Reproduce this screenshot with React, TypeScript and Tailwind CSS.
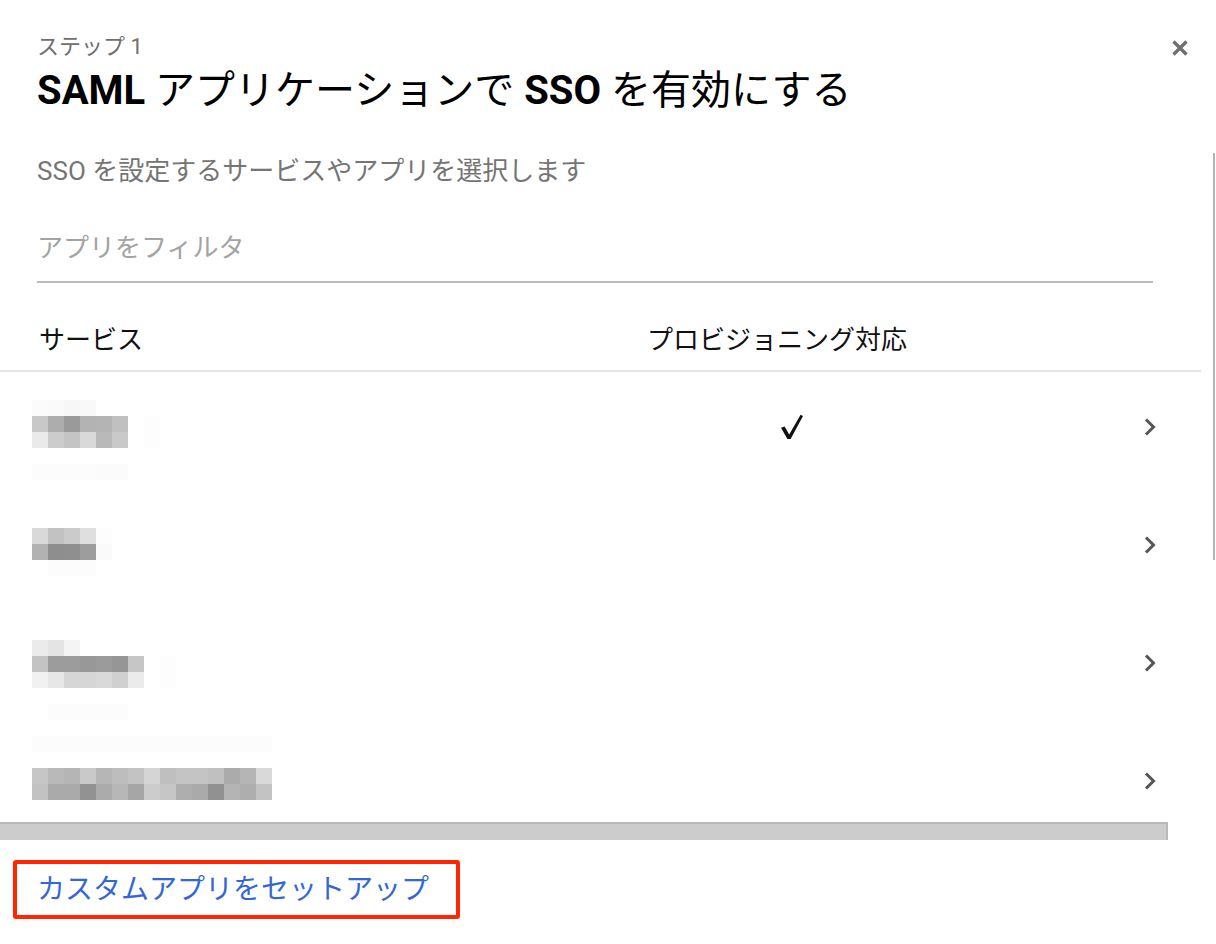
import React from 'react';

type PixelRows = string[][];

// obfuscated app names, drawn as 16px mosaic cells
const ROWS: { top: number; pixels: PixelRows; provisioning: boolean }[] = [
  {
    top: 28,
    provisioning: true,
    pixels: [
      ['#fbfbfb', '#fafafa', '#f7f7f7', '#f9f9f9'],
      ['#c8c8c8', '#adadad', '#9a9a9a', '#b3b3b3', '#b4b4b4', '#c0c0c0', '', '#fdfdfd'],
      ['#eaeaea', '#cccccc', '#c4c4c4', '#d9d9d9', '#b9b9b9', '#c9c9c9', '', '#fdfdfd'],
      [],
      ['#fcfcfc', '#fcfcfc', '#fcfcfc', '#fcfcfc', '#fbfbfb', '#fbfbfb'],
    ],
  },
  {
    top: 38,
    provisioning: false,
    pixels: [
      ['#d9d9d9', '#c2c2c2', '#cbcbcb', '#dfdfdf', '#fdfdfd'],
      ['#b2b2b2', '#8e8e8e', '#8f8f8f', '#9d9d9d', '#fafafa'],
      ['', '#fcfcfc', '#fcfcfc', '#fcfcfc'],
    ],
  },
  {
    top: 32,
    provisioning: false,
    pixels: [
      ['#ebebeb', '#e4e4e4', '#f4f4f4'],
      ['#c3c3c3', '#9c9c9c', '#9c9c9c', '#989898', '#9b9b9b', '#969696', '#c6c6c6', '', '#fdfdfd'],
      ['#f1f1f1', '#e7e7e7', '#d6d6d6', '#d6d6d6', '#d9d9d9', '#d0d0d0', '#ebebeb', '', '#fdfdfd'],
      [],
      ['', '#fcfcfc', '#fcfcfc', '#fcfcfc', '#fcfcfc', '#fcfcfc'],
    ],
  },
  {
    top: 10,
    provisioning: false,
    pixels: [
      Array(15).fill('#fcfcfc'),
      [],
      ['#c6c6c6', '#b9b9b9', '#b5b5b5', '#c9c9c9', '#b6b6b6', '#bdbdbd', '#c3c3c3', '#d5d5d5', '#bfbfbf', '#c4c4c4', '#c4c4c4', '#c0c0c0', '#ababab', '#b5b5b5', '#d9d9d9'],
      ['#c2c2c2', '#aaaaaa', '#aaaaaa', '#929292', '#ababab', '#b7b7b7', '#a6a6a6', '#cccccc', '#c6c6c6', '#aeaeae', '#aaaaaa', '#919191', '#b4b4b4', '#aeaeae', '#c3c3c3'],
    ],
  },
];

function Mosaic({ pixels }: { pixels: PixelRows }) {
  return (
    <div className="flex flex-col">
      {pixels.map((row, i) => (
        <div key={i} className="flex h-[16px]">
          {row.map((c, j) => (
            <div key={j} className="w-[16px] h-[16px]" style={{ backgroundColor: c || 'transparent' }} />
          ))}
        </div>
      ))}
    </div>
  );
}

function Chevron() {
  return (
    <svg width="14" height="20" viewBox="0 0 14 20" className="mb-[8px]">
      <path d="M3 2.5 L10.5 10 L3 17.5" fill="none" stroke="#555555" strokeWidth="3" />
    </svg>
  );
}

function Check() {
  return (
    <svg width="24" height="26" viewBox="0 0 24 26" className="mb-[8px]">
      <path d="M1 13.8 L4.6 12.4 L9.2 20.6 L20.6 0.8 L23 2 L10.6 25 L7.4 25 Z" fill="#111111" />
    </svg>
  );
}

export default function App() {
  return (
    <div className="relative w-[1216px] h-[944px] bg-white overflow-hidden font-[Roboto,'Noto_Sans_CJK_JP',sans-serif] text-[#202124]">
      {/* close */}
      <button className="absolute left-[1171px] top-[39px] w-[18px] h-[18px] flex items-center justify-center">
        <svg width="18" height="18" viewBox="0 0 18 18">
          <path d="M2.5 2.5 L15.5 15.5 M15.5 2.5 L2.5 15.5" stroke="#6f6f6f" strokeWidth="3.4" />
        </svg>
      </button>
      {/* dialog scrollbar */}
      <div className="absolute left-[1213px] top-[153px] w-[2px] h-[407px] bg-[#b4b4b4]" />

      <div className="px-[37px] pt-[34px]">
        <p className="text-[22px] leading-[26px] text-[#6f6f6f]">ステップ 1</p>
        <h1 className="mt-[7px] text-[40px] leading-[48px] text-black whitespace-nowrap">
          <span className="font-bold">SAML</span> アプリケーションで <span className="font-bold">SSO</span> を有効にする
        </h1>
        <p className="mt-[41px] text-[26px] leading-[30px] text-[#757575]">SSO を設定するサービスやアプリを選択します</p>
        <div className="mt-[47px] w-[1116px] h-[50px] border-b-2 border-[#bdbdbd]">
          <span className="block text-[26px] leading-[30px] text-[#a3a3a3]">アプリをフィルタ</span>
        </div>
      </div>

      <div className="w-[1201px] flex pt-[42px] pb-[15px] border-b-2 border-[#e6e6e6] text-[26px] leading-[30px] text-[#111111]">
        <div className="pl-[39px] w-[647px]">サービス</div>
        <div>プロビジョニング対応</div>
      </div>

      <div className="h-[450px] overflow-hidden">
        {ROWS.map((row, i) => (
          <div key={i} className="flex h-[118px] w-[1201px]">
            <div className="w-[648px] pl-[32px]" style={{ paddingTop: row.top }}>
              <Mosaic pixels={row.pixels} />
            </div>
            <div className="w-[490px] flex items-center pl-[132px]">
              {row.provisioning && <Check />}
            </div>
            <div className="flex items-center pl-[5px]">
              <Chevron />
            </div>
          </div>
        ))}
      </div>

      {/* horizontal scrollbar */}
      <div className="w-[1168px] h-[18px] bg-[#cccccc] border-t-2 border-r-2 border-[#b8b8b8]" />

      <div className="mt-[20px] ml-[13px] w-[447px] h-[59px] border-4 border-[#ff2600] rounded-[3px] flex items-center pl-[20px]">
        <a className="text-[28px] leading-[34px] text-[#3367d6] whitespace-nowrap">カスタムアプリをセットアップ</a>
      </div>
    </div>
  );
}
